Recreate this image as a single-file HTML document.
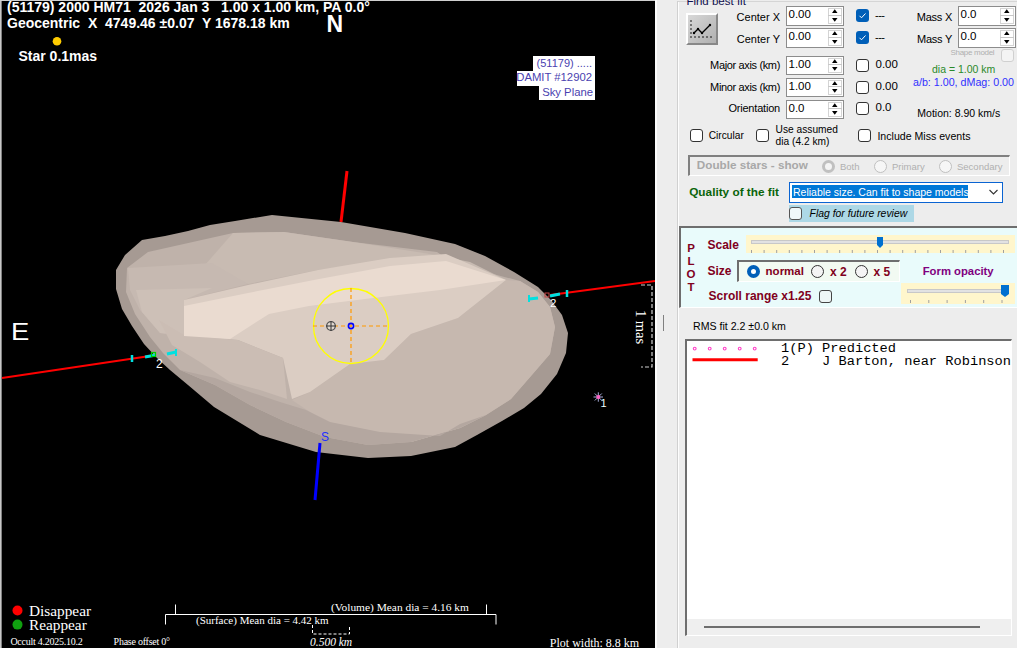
<!DOCTYPE html>
<html><head><meta charset="utf-8"><style>
html,body{margin:0;padding:0;width:1017px;height:648px;overflow:hidden;background:#000;}
body{position:relative;font-family:"Liberation Sans", sans-serif;}
.t{position:absolute;white-space:nowrap;}
.b{position:absolute;}
</style></head><body>
<div class="b" style="left:0px;top:0px;width:655px;height:648px;background:#000;"></div>
<div class="b" style="left:0px;top:0px;width:1px;height:648px;background:#c8c8c8;"></div>
<div class="b" style="left:1px;top:0px;width:1px;height:648px;background:#808080;"></div>
<div class="b" style="left:0px;top:0px;width:655px;height:1px;background:#d0d0d0;"></div>
<svg class="b" style="left:0;top:0" width="655" height="648" viewBox="0 0 655 648">
<polygon points="116,270 125,255 142,240 165,236 188,231 210,225 235,221 272,215 341,222 405,233 455,244 485,256 514,272 538,287 551,300 562,315 568,333 566,353 557,374 541,394 524,408 502,421 477,435 455,447 411,456 368,458 316,452 260,435 214,407 188,385 170,370 157,358 144,344 132,326 122,309 116,289" fill="#a69a93"/>
<polygon points="127,268 148,252 233,233 284,232 353,242 437,252 450,261 479,270 497,275 520,281 538,292 550,307 555,327 550,354 531,376 511,399 486,415 460,428 411,442 368,445 325,437 286,422 250,405 215,385 180,370 163,353 150,337 135,314 126,292" fill="#bfb2aa" />
<polygon points="233,233 284,232 353,242 430,254 470,262 506,280 446,258 390,260 318,270 248,284 205,265" fill="#c8bbb2" />
<polygon points="128,268 212,263 248,284 184,300 184,336 160,333 140,310 130,290" fill="#c6b9b1" />
<polygon points="136,290 212,288 184,300 184,336 160,333 142,312" fill="#cdc0b7" />
<polygon points="506,280 520,281 538,292 550,307 555,327 550,354 531,376 511,399 486,415 460,428 411,442 368,433 325,422 292,400 310,392 330,378 350,364 384,360 411,334 458,318" fill="#c6b8af" />
<polygon points="180,370 215,385 250,405 286,422 325,437 368,445 411,442 460,428 486,415 460,424 440,436 380,432 330,422 306,410 280,402 250,392 215,378" fill="#b4a7a0" />
<polygon points="184,300 248,285 318,270 390,258 446,254 506,280 458,318 411,334 384,360 350,364 330,378 310,392 292,399 283,358 238,340 184,335" fill="#dbcdc3" />
<polygon points="159,320 184,335 238,340 283,358 287,399 260,390 230,382 200,362 172,345" fill="#cbbdb4" />
<polygon points="184,306 248,293 319,279 390,266 446,261 506,280 440,290 365,299 309,306 269,314 230,339 184,336" fill="#eadbd0" />
<line x1="2" y1="378" x2="150" y2="356" stroke="#ff0000" stroke-width="2"/>
<line x1="550" y1="295" x2="655" y2="281" stroke="#ff0000" stroke-width="2"/>
<line x1="347" y1="171" x2="341" y2="222" stroke="#ff0000" stroke-width="3"/>
<line x1="320" y1="443" x2="315" y2="500" stroke="#0000ff" stroke-width="3"/>
<circle cx="351" cy="326" r="37.5" fill="none" stroke="#ffff00" stroke-width="1.3"/>
<line x1="313" y1="326" x2="389" y2="326" stroke="#ff9900" stroke-width="1.2" stroke-dasharray="4,3"/>
<line x1="351" y1="288" x2="351" y2="364" stroke="#ff9900" stroke-width="1.2" stroke-dasharray="4,3"/>
<circle cx="351" cy="326" r="2.6" fill="none" stroke="#0000ff" stroke-width="1.6"/>
<circle cx="331" cy="326" r="4.3" fill="#e0d8d0" stroke="#555" stroke-width="1.3"/>
<line x1="326" y1="326" x2="336" y2="326" stroke="#333" stroke-width="1"/>
<line x1="331" y1="321" x2="331" y2="331" stroke="#333" stroke-width="1"/>
<line x1="145" y1="357" x2="156" y2="355" stroke="#00e0e0" stroke-width="3"/>
<line x1="132" y1="355" x2="132" y2="362" stroke="#00e0e0" stroke-width="2.5"/>
<rect x="151.5" y="352.5" width="4" height="4" fill="none" stroke="#00d000" stroke-width="1.2"/>
<line x1="167" y1="354" x2="176" y2="352" stroke="#00e0e0" stroke-width="3"/>
<line x1="176" y1="349" x2="176" y2="356" stroke="#00e0e0" stroke-width="2"/>
<line x1="529" y1="299" x2="538" y2="298" stroke="#00e0e0" stroke-width="3"/>
<line x1="529" y1="295" x2="529" y2="302" stroke="#00e0e0" stroke-width="2"/>
<line x1="550" y1="296" x2="560" y2="294" stroke="#00e0e0" stroke-width="3"/>
<line x1="567" y1="290" x2="567" y2="297" stroke="#00e0e0" stroke-width="2.5"/>
<rect x="545" y="293" width="4" height="4" fill="none" stroke="#c04040" stroke-width="1"/>
<path d="M641 285 H652 V367 H641" fill="none" stroke="#d0d0d0" stroke-width="1.2" stroke-dasharray="4,2"/>
<g stroke="#b8c0f0" stroke-width="0.9"><line x1="593.5" y1="397" x2="603" y2="397"/><line x1="598.3" y1="392.3" x2="598.3" y2="401.7"/><line x1="594.8" y1="393.5" x2="601.8" y2="400.5"/><line x1="601.8" y1="393.5" x2="594.8" y2="400.5"/></g><circle cx="598.3" cy="397" r="2" fill="#ff60c0"/>
<circle cx="57" cy="41.3" r="4.3" fill="#ffcc00"/>
<circle cx="17.5" cy="610.5" r="5" fill="#ff0000"/>
<circle cx="17.5" cy="624.6" r="5" fill="#10a010"/>
<path d="M165.5 624.5 V614.5 H496 V624.5" fill="none" stroke="#ffffff" stroke-width="1"/>
<path d="M175.5 604.5 V614.5 M486.5 604.5 V614.5" fill="none" stroke="#ffffff" stroke-width="1"/>
<path d="M312.5 625 V634 H349.5 V625" fill="none" stroke="#ffffff" stroke-width="1" stroke-dasharray="3,2"/>
</svg>
<div class="t" style="top:-0.35px;font-size:14px;line-height:14px;color:#fff;font-weight:bold;left:7.00px;">(51179) 2000 HM71&nbsp; 2026 Jan 3 &nbsp; 1.00 x 1.00 km, PA 0.0°</div>
<div class="t" style="top:15.65px;font-size:14px;line-height:14px;color:#fff;font-weight:bold;left:7.00px;">Geocentric&nbsp; X&nbsp; 4749.46 ±0.07&nbsp; Y 1678.18 km</div>
<div class="t" style="top:12.53px;font-size:23px;line-height:23px;color:#fff;font-weight:bold;left:326.50px;">N</div>
<div class="t" style="top:49.15px;font-size:14px;line-height:14px;color:#fff;font-weight:bold;left:18.50px;">Star 0.1mas</div>
<div class="t" style="top:319.56px;font-size:24.5px;line-height:24.5px;color:#fff;left:11.00px;transform:scaleX(1.12);transform-origin:left;">E</div>
<div class="b" style="left:533px;top:56px;width:62px;height:15px;background:#fff;"></div>
<div class="b" style="left:517px;top:71px;width:78px;height:15px;background:#fff;"></div>
<div class="b" style="left:539px;top:85px;width:56px;height:15px;background:#fff;"></div>
<div class="t" style="top:57.69px;font-size:11px;line-height:11px;color:#4a3fb0;right:425.00px;">(51179) .....</div>
<div class="t" style="top:72.43px;font-size:11.3px;line-height:11.3px;color:#4a3fb0;right:425.00px;">DAMIT #12902</div>
<div class="t" style="top:86.93px;font-size:11.3px;line-height:11.3px;color:#4a3fb0;right:424.00px;">Sky Plane</div>
<div class="t" style="top:430.84px;font-size:12px;line-height:12px;color:#2030ff;left:321.00px;">S</div>
<div class="t" style="top:357.84px;font-size:12px;line-height:12px;color:#fff;left:156.00px;">2</div>
<div class="t" style="top:298.27px;font-size:11.5px;line-height:11.5px;color:#fff;left:550.00px;">2</div>
<div class="t" style="top:398.39px;font-size:11px;line-height:11px;color:#f0ffff;left:600.50px;">1</div>
<div class="t" style="top:603.19px;font-size:15.3px;line-height:15.3px;color:#fff;font-family:'Liberation Serif', serif;left:29.00px;">Disappear</div>
<div class="t" style="top:616.79px;font-size:15.3px;line-height:15.3px;color:#fff;font-family:'Liberation Serif', serif;left:29.00px;">Reappear</div>
<div class="t" style="top:637.42px;font-size:10px;line-height:10px;color:#fff;font-family:'Liberation Serif', serif;letter-spacing:-0.25px;left:10.40px;">Occult 4.2025.10.2</div>
<div class="t" style="top:637.42px;font-size:10px;line-height:10px;color:#fff;font-family:'Liberation Serif', serif;letter-spacing:-0.25px;left:113.60px;">Phase offset 0°</div>
<div class="t" style="top:615.29px;font-size:11px;line-height:11px;color:#fff;font-family:'Liberation Serif', serif;left:196.00px;">(Surface) Mean dia = 4.42 km</div>
<div class="t" style="top:601.75px;font-size:11.4px;line-height:11.4px;color:#fff;font-family:'Liberation Serif', serif;left:331.00px;">(Volume) Mean dia = 4.16 km</div>
<div class="t" style="top:637.17px;font-size:11.5px;line-height:11.5px;color:#fff;font-family:'Liberation Serif', serif;font-style:italic;left:310.00px;">0.500 km</div>
<div class="t" style="top:636.75px;font-size:12px;line-height:12px;color:#fff;font-family:'Liberation Serif', serif;left:549.80px;">Plot width: 8.8 km</div>
<div class="t" style="left:641px;top:327px;font-family:'Liberation Serif',serif;font-size:14.5px;line-height:14.5px;color:#fff;transform:translate(-50%,-50%) rotate(90deg);">1 mas</div>
<div class="b" style="left:655px;top:0px;width:362px;height:648px;background:#ededed;"></div>
<div class="b" style="left:655px;top:0px;width:2px;height:648px;background:#fcfcfc;"></div>
<div class="b" style="left:677px;top:1px;width:340px;height:1px;background:#d5d5d5;"></div>
<div class="b" style="left:677px;top:1px;width:1px;height:647px;background:#d0d0d0;"></div>
<div class="b" style="left:678px;top:2px;width:1px;height:646px;background:#fdfdfd;"></div>
<div class="t" style="top:-4.33px;font-size:11.5px;line-height:11.5px;color:#101050;left:686.40px;">Find best fit</div>
<div class="b" style="left:686px;top:13px;width:32px;height:32px;box-sizing:border-box;border-top:2px solid #fff;border-left:2px solid #fff;border-right:2px solid #888;border-bottom:2px solid #888;background:linear-gradient(135deg,#d8d8d8,#b0b0b0);"></div>
<svg class="b" style="left:686px;top:13px" width="32" height="32"><g fill="#000"><circle cx="5" cy="8" r="0.8"/><circle cx="5" cy="12" r="0.8"/><circle cx="5" cy="16" r="0.8"/><circle cx="5" cy="20" r="0.8"/><circle cx="5" cy="24" r="0.8"/><circle cx="9" cy="24" r="0.8"/><circle cx="13" cy="24" r="0.8"/><circle cx="17" cy="24" r="0.8"/><circle cx="21" cy="24" r="0.8"/><circle cx="25" cy="24" r="0.8"/></g><polyline points="8,20 12,16 16,20 24,12" fill="none" stroke="#000" stroke-width="1.3"/><g fill="#000"><circle cx="8" cy="20" r="1.2"/><circle cx="12" cy="16" r="1.2"/><circle cx="16" cy="20" r="1.2"/><circle cx="24" cy="12" r="1.2"/></g></svg>
<div class="b" style="left:786px;top:6px;width:58px;height:20px;box-sizing:border-box;border:1px solid #8c8c8c;background:#fff;"></div>
<div class="b" style="left:828px;top:8px;width:14px;height:16px;box-sizing:border-box;border:1px solid #d4d4d4;background:#fff;"></div>
<div class="b" style="left:828px;top:15px;width:14px;height:1px;background:#c8c8c8;"></div>
<svg class="b" style="left:828px;top:6px" width="14" height="20"><polygon points="4,7 9.5,7 6.75,3.2" fill="#000"/><polygon points="4,12 9.5,12 6.75,15.8" fill="#000"/></svg>
<div class="t" style="top:8.77px;font-size:11.5px;line-height:11.5px;color:#000;left:788.50px;">0.00</div>
<div class="b" style="left:786px;top:28px;width:58px;height:20px;box-sizing:border-box;border:1px solid #8c8c8c;background:#fff;"></div>
<div class="b" style="left:828px;top:30px;width:14px;height:16px;box-sizing:border-box;border:1px solid #d4d4d4;background:#fff;"></div>
<div class="b" style="left:828px;top:37px;width:14px;height:1px;background:#c8c8c8;"></div>
<svg class="b" style="left:828px;top:28px" width="14" height="20"><polygon points="4,7 9.5,7 6.75,3.2" fill="#000"/><polygon points="4,12 9.5,12 6.75,15.8" fill="#000"/></svg>
<div class="t" style="top:30.77px;font-size:11.5px;line-height:11.5px;color:#000;left:788.50px;">0.00</div>
<div class="b" style="left:786px;top:56px;width:58px;height:19px;box-sizing:border-box;border:1px solid #8c8c8c;background:#fff;"></div>
<div class="b" style="left:828px;top:58px;width:14px;height:15px;box-sizing:border-box;border:1px solid #d4d4d4;background:#fff;"></div>
<div class="b" style="left:828px;top:64px;width:14px;height:1px;background:#c8c8c8;"></div>
<svg class="b" style="left:828px;top:56px" width="14" height="19"><polygon points="4,7 9.5,7 6.75,3.2" fill="#000"/><polygon points="4,11 9.5,11 6.75,14.8" fill="#000"/></svg>
<div class="t" style="top:58.77px;font-size:11.5px;line-height:11.5px;color:#000;left:788.50px;">1.00</div>
<div class="b" style="left:786px;top:78px;width:58px;height:19px;box-sizing:border-box;border:1px solid #8c8c8c;background:#fff;"></div>
<div class="b" style="left:828px;top:80px;width:14px;height:15px;box-sizing:border-box;border:1px solid #d4d4d4;background:#fff;"></div>
<div class="b" style="left:828px;top:86px;width:14px;height:1px;background:#c8c8c8;"></div>
<svg class="b" style="left:828px;top:78px" width="14" height="19"><polygon points="4,7 9.5,7 6.75,3.2" fill="#000"/><polygon points="4,11 9.5,11 6.75,14.8" fill="#000"/></svg>
<div class="t" style="top:80.77px;font-size:11.5px;line-height:11.5px;color:#000;left:788.50px;">1.00</div>
<div class="b" style="left:786px;top:100px;width:58px;height:19px;box-sizing:border-box;border:1px solid #8c8c8c;background:#fff;"></div>
<div class="b" style="left:828px;top:102px;width:14px;height:15px;box-sizing:border-box;border:1px solid #d4d4d4;background:#fff;"></div>
<div class="b" style="left:828px;top:108px;width:14px;height:1px;background:#c8c8c8;"></div>
<svg class="b" style="left:828px;top:100px" width="14" height="19"><polygon points="4,7 9.5,7 6.75,3.2" fill="#000"/><polygon points="4,11 9.5,11 6.75,14.8" fill="#000"/></svg>
<div class="t" style="top:102.77px;font-size:11.5px;line-height:11.5px;color:#000;left:788.50px;">0.0</div>
<div class="b" style="left:958px;top:6px;width:58px;height:20px;box-sizing:border-box;border:1px solid #8c8c8c;background:#fff;"></div>
<div class="b" style="left:1000px;top:8px;width:14px;height:16px;box-sizing:border-box;border:1px solid #d4d4d4;background:#fff;"></div>
<div class="b" style="left:1000px;top:15px;width:14px;height:1px;background:#c8c8c8;"></div>
<svg class="b" style="left:1000px;top:6px" width="14" height="20"><polygon points="4,7 9.5,7 6.75,3.2" fill="#000"/><polygon points="4,12 9.5,12 6.75,15.8" fill="#000"/></svg>
<div class="t" style="top:8.77px;font-size:11.5px;line-height:11.5px;color:#000;left:960.50px;">0.0</div>
<div class="b" style="left:958px;top:28px;width:58px;height:20px;box-sizing:border-box;border:1px solid #8c8c8c;background:#fff;"></div>
<div class="b" style="left:1000px;top:30px;width:14px;height:16px;box-sizing:border-box;border:1px solid #d4d4d4;background:#fff;"></div>
<div class="b" style="left:1000px;top:37px;width:14px;height:1px;background:#c8c8c8;"></div>
<svg class="b" style="left:1000px;top:28px" width="14" height="20"><polygon points="4,7 9.5,7 6.75,3.2" fill="#000"/><polygon points="4,12 9.5,12 6.75,15.8" fill="#000"/></svg>
<div class="t" style="top:30.77px;font-size:11.5px;line-height:11.5px;color:#000;left:960.50px;">0.0</div>
<div class="t" style="top:11.89px;font-size:11px;line-height:11px;color:#000;right:237.00px;">Center X</div>
<div class="t" style="top:33.59px;font-size:11px;line-height:11px;color:#000;right:237.00px;">Center Y</div>
<div class="t" style="top:60.49px;font-size:11px;line-height:11px;color:#000;letter-spacing:-0.35px;right:237.00px;">Major axis (km)</div>
<div class="t" style="top:82.09px;font-size:11px;line-height:11px;color:#000;letter-spacing:-0.35px;right:237.00px;">Minor axis (km)</div>
<div class="t" style="top:103.39px;font-size:11px;line-height:11px;color:#000;letter-spacing:-0.2px;right:237.00px;">Orientation</div>
<div class="t" style="top:11.99px;font-size:11px;line-height:11px;color:#000;letter-spacing:-0.25px;right:65.00px;">Mass X</div>
<div class="t" style="top:33.69px;font-size:11px;line-height:11px;color:#000;letter-spacing:-0.25px;right:65.00px;">Mass Y</div>
<div class="b" style="left:856px;top:9px;width:13px;height:13px;border-radius:3px;background:#005fb8;"></div>
<svg class="b" style="left:856px;top:9px" width="13" height="13"><polyline points="3.5,6.8 5.5,8.8 9.5,4.5" fill="none" stroke="#fff" stroke-width="1"/></svg>
<div class="b" style="left:856px;top:31px;width:13px;height:13px;border-radius:3px;background:#005fb8;"></div>
<svg class="b" style="left:856px;top:31px" width="13" height="13"><polyline points="3.5,6.8 5.5,8.8 9.5,4.5" fill="none" stroke="#fff" stroke-width="1"/></svg>
<div class="t" style="top:9.69px;font-size:11px;line-height:11px;color:#000;letter-spacing:-0.5px;left:875.00px;">---</div>
<div class="t" style="top:31.69px;font-size:11px;line-height:11px;color:#000;letter-spacing:-0.5px;left:875.00px;">---</div>
<div class="b" style="left:856px;top:59px;width:13px;height:13px;box-sizing:border-box;border-radius:3px;border:1px solid #333;background:#fff;"></div>
<div class="b" style="left:856px;top:81px;width:13px;height:13px;box-sizing:border-box;border-radius:3px;border:1px solid #333;background:#fff;"></div>
<div class="b" style="left:856px;top:102px;width:13px;height:13px;box-sizing:border-box;border-radius:3px;border:1px solid #333;background:#fff;"></div>
<div class="t" style="top:59.07px;font-size:11.5px;line-height:11.5px;color:#000;left:875.50px;">0.00</div>
<div class="t" style="top:80.77px;font-size:11.5px;line-height:11.5px;color:#000;left:875.50px;">0.00</div>
<div class="t" style="top:102.27px;font-size:11.5px;line-height:11.5px;color:#000;left:875.50px;">0.0</div>
<div class="t" style="top:49.23px;font-size:8px;line-height:8px;color:#b0b0b0;letter-spacing:-0.3px;left:950.50px;">Shape model</div>
<div class="b" style="left:1001px;top:49px;width:13px;height:13px;box-sizing:border-box;border-radius:3px;border:1px solid #d0d0d0;background:#f4f4f4;"></div>
<div class="t" style="top:63.71px;font-size:10.5px;line-height:10.5px;color:#2a8a2a;left:932.00px;">dia = 1.00 km</div>
<div class="t" style="top:76.94px;font-size:10.7px;line-height:10.7px;color:#3030ff;left:913.00px;">a/b: 1.00, dMag: 0.00</div>
<div class="t" style="top:107.91px;font-size:10.5px;line-height:10.5px;color:#000;left:917.30px;">Motion: 8.90 km/s</div>
<div class="b" style="left:690px;top:129px;width:13px;height:13px;box-sizing:border-box;border-radius:3px;border:1px solid #333;background:#fff;"></div>
<div class="b" style="left:756px;top:129px;width:13px;height:13px;box-sizing:border-box;border-radius:3px;border:1px solid #333;background:#fff;"></div>
<div class="b" style="left:858px;top:129px;width:13px;height:13px;box-sizing:border-box;border-radius:3px;border:1px solid #333;background:#fff;"></div>
<div class="t" style="top:130.97px;font-size:10.2px;line-height:10.2px;color:#000;left:708.70px;">Circular</div>
<div class="t" style="top:124.57px;font-size:10.2px;line-height:10.2px;color:#000;left:775.60px;">Use assumed</div>
<div class="t" style="top:136.77px;font-size:10.2px;line-height:10.2px;color:#000;left:775.60px;">dia (4.2 km)</div>
<div class="t" style="top:130.63px;font-size:10.6px;line-height:10.6px;color:#000;left:877.40px;">Include Miss events</div>
<div class="b" style="left:688px;top:155px;width:322px;height:21px;box-sizing:border-box;border-top:2px solid #808080;border-left:2px solid #808080;border-right:1px solid #fff;border-bottom:1px solid #fff;"></div>
<div class="t" style="top:159.40px;font-size:11.7px;line-height:11.7px;color:#a8a8a8;font-weight:bold;left:696.80px;">Double stars - show</div>
<div class="b" style="left:822px;top:160px;width:13px;height:13px;box-sizing:border-box;border-radius:50%;border:3px solid #c0c0c0;background:#f4f4f4;"></div>
<div class="t" style="top:161.96px;font-size:9.5px;line-height:9.5px;color:#b0b0b0;left:840.00px;">Both</div>
<div class="b" style="left:874px;top:160px;width:13px;height:13px;box-sizing:border-box;border-radius:50%;border:1px solid #c0c0c0;background:#f6f6f6;"></div>
<div class="t" style="top:161.96px;font-size:9.5px;line-height:9.5px;color:#b0b0b0;left:892.00px;">Primary</div>
<div class="b" style="left:939px;top:160px;width:13px;height:13px;box-sizing:border-box;border-radius:50%;border:1px solid #c0c0c0;background:#f6f6f6;"></div>
<div class="t" style="top:161.96px;font-size:9.5px;line-height:9.5px;color:#b0b0b0;left:957.00px;">Secondary</div>
<div class="t" style="top:186.71px;font-size:11.8px;line-height:11.8px;color:#0a640a;font-weight:bold;left:689.20px;">Quality of the fit</div>
<div class="b" style="left:789px;top:182px;width:214px;height:21px;box-sizing:border-box;border:1px solid #0a64d2;background:#fff;"></div>
<div class="b" style="left:792px;top:185px;width:176px;height:13px;background:#0078d7;"></div>
<div class="t" style="top:186.61px;font-size:10.5px;line-height:10.5px;color:#fff;left:793.00px;">Reliable size. Can fit to shape models</div>
<svg class="b" style="left:988px;top:187px" width="12" height="10"><polyline points="1.5,3 5.5,7 9.5,3" fill="none" stroke="#333" stroke-width="1.1"/></svg>
<div class="b" style="left:789px;top:205px;width:125px;height:17px;background:#add8e6;"></div>
<div class="b" style="left:789px;top:207px;width:13px;height:13px;box-sizing:border-box;border-radius:3px;border:1px solid #555;background:#f0f8fa;"></div>
<div class="t" style="top:209.20px;font-size:10.4px;line-height:10.4px;color:#000;font-style:italic;left:809.60px;">Flag for future review</div>
<div class="b" style="left:679px;top:226px;width:338px;height:82px;box-sizing:border-box;border-top:2px solid #6e6e6e;border-left:2px solid #6e6e6e;border-bottom:1px solid #fff;background:#e9fbfb;"></div>
<div class="t" style="top:242.77px;font-size:11.5px;line-height:11.5px;color:#800020;font-weight:bold;left:691.00px;transform:translateX(-50%);">P</div>
<div class="t" style="top:255.87px;font-size:11.5px;line-height:11.5px;color:#800020;font-weight:bold;left:691.00px;transform:translateX(-50%);">L</div>
<div class="t" style="top:268.97px;font-size:11.5px;line-height:11.5px;color:#800020;font-weight:bold;left:691.00px;transform:translateX(-50%);">O</div>
<div class="t" style="top:282.07px;font-size:11.5px;line-height:11.5px;color:#800020;font-weight:bold;left:691.00px;transform:translateX(-50%);">T</div>
<div class="t" style="top:238.54px;font-size:12px;line-height:12px;color:#800020;font-weight:bold;left:707.50px;">Scale</div>
<div class="b" style="left:746px;top:235px;width:269px;height:18px;background:#fff6cc;"></div>
<div class="b" style="left:751px;top:240px;width:258px;height:4px;background:#e2e2e2;border:1px solid #c8c8c8;box-sizing:border-box;"></div>
<svg class="b" style="left:746px;top:235px" width="269" height="18"><line x1="5.5" y1="15" x2="5.5" y2="18" stroke="#a0a0a0" stroke-width="1"/><line x1="18.1" y1="15" x2="18.1" y2="18" stroke="#a0a0a0" stroke-width="1"/><line x1="30.7" y1="15" x2="30.7" y2="18" stroke="#a0a0a0" stroke-width="1"/><line x1="43.3" y1="15" x2="43.3" y2="18" stroke="#a0a0a0" stroke-width="1"/><line x1="55.9" y1="15" x2="55.9" y2="18" stroke="#a0a0a0" stroke-width="1"/><line x1="68.5" y1="15" x2="68.5" y2="18" stroke="#a0a0a0" stroke-width="1"/><line x1="81.1" y1="15" x2="81.1" y2="18" stroke="#a0a0a0" stroke-width="1"/><line x1="93.7" y1="15" x2="93.7" y2="18" stroke="#a0a0a0" stroke-width="1"/><line x1="106.3" y1="15" x2="106.3" y2="18" stroke="#a0a0a0" stroke-width="1"/><line x1="118.9" y1="15" x2="118.9" y2="18" stroke="#a0a0a0" stroke-width="1"/><line x1="131.5" y1="15" x2="131.5" y2="18" stroke="#a0a0a0" stroke-width="1"/><line x1="144.1" y1="15" x2="144.1" y2="18" stroke="#a0a0a0" stroke-width="1"/><line x1="156.7" y1="15" x2="156.7" y2="18" stroke="#a0a0a0" stroke-width="1"/><line x1="169.3" y1="15" x2="169.3" y2="18" stroke="#a0a0a0" stroke-width="1"/><line x1="181.9" y1="15" x2="181.9" y2="18" stroke="#a0a0a0" stroke-width="1"/><line x1="194.5" y1="15" x2="194.5" y2="18" stroke="#a0a0a0" stroke-width="1"/><line x1="207.1" y1="15" x2="207.1" y2="18" stroke="#a0a0a0" stroke-width="1"/><line x1="219.7" y1="15" x2="219.7" y2="18" stroke="#a0a0a0" stroke-width="1"/><line x1="232.3" y1="15" x2="232.3" y2="18" stroke="#a0a0a0" stroke-width="1"/><line x1="244.9" y1="15" x2="244.9" y2="18" stroke="#a0a0a0" stroke-width="1"/><line x1="257.5" y1="15" x2="257.5" y2="18" stroke="#a0a0a0" stroke-width="1"/><path d="M131 2 H137 V10 L134 13 L131 10 Z" fill="#0070d0"/></svg>
<div class="t" style="top:264.74px;font-size:12px;line-height:12px;color:#800020;font-weight:bold;left:707.50px;">Size</div>
<div class="b" style="left:737px;top:260px;width:163px;height:22px;box-sizing:border-box;border-top:2px solid #6e6e6e;border-left:2px solid #6e6e6e;border-right:1px solid #fff;border-bottom:1px solid #fff;background:#f2faf2;"></div>
<div class="b" style="left:747px;top:265px;width:13px;height:13px;box-sizing:border-box;border-radius:50%;border:4px solid #005fb8;background:#fff;"></div>
<div class="t" style="top:266.27px;font-size:11.5px;line-height:11.5px;color:#800020;font-weight:bold;left:765.60px;">normal</div>
<div class="b" style="left:811px;top:265px;width:13px;height:13px;box-sizing:border-box;border-radius:50%;border:1px solid #333;background:#f4f4f4;"></div>
<div class="t" style="top:265.84px;font-size:12px;line-height:12px;color:#800020;font-weight:bold;left:830.00px;">x 2</div>
<div class="b" style="left:855px;top:265px;width:13px;height:13px;box-sizing:border-box;border-radius:50%;border:1px solid #333;background:#f4f4f4;"></div>
<div class="t" style="top:265.84px;font-size:12px;line-height:12px;color:#800020;font-weight:bold;left:873.40px;">x 5</div>
<div class="t" style="top:265.73px;font-size:11.3px;line-height:11.3px;color:#800080;font-weight:bold;left:922.70px;">Form opacity</div>
<div class="t" style="top:290.34px;font-size:12px;line-height:12px;color:#800020;font-weight:bold;left:708.60px;">Scroll range x1.25</div>
<div class="b" style="left:819px;top:290px;width:13px;height:13px;box-sizing:border-box;border-radius:3px;border:1px solid #444;background:#eef6f6;"></div>
<div class="b" style="left:901px;top:283px;width:114px;height:21px;background:#fff6cc;"></div>
<div class="b" style="left:907px;top:289px;width:102px;height:4px;background:#e2e2e2;border:1px solid #c8c8c8;box-sizing:border-box;"></div>
<svg class="b" style="left:901px;top:283px" width="114" height="21"><line x1="9.5" y1="17" x2="9.5" y2="20" stroke="#a0a0a0" stroke-width="1"/><line x1="27.8" y1="17" x2="27.8" y2="20" stroke="#a0a0a0" stroke-width="1"/><line x1="46.1" y1="17" x2="46.1" y2="20" stroke="#a0a0a0" stroke-width="1"/><line x1="64.4" y1="17" x2="64.4" y2="20" stroke="#a0a0a0" stroke-width="1"/><line x1="82.7" y1="17" x2="82.7" y2="20" stroke="#a0a0a0" stroke-width="1"/><line x1="101.0" y1="17" x2="101.0" y2="20" stroke="#a0a0a0" stroke-width="1"/><path d="M100 2 H108 V11 L104 14 L100 11 Z" fill="#0070d0"/></svg>
<div class="b" style="left:663px;top:315px;width:1px;height:16px;background:#808080;"></div>
<div class="t" style="top:320.53px;font-size:10.6px;line-height:10.6px;color:#000;left:693.00px;">RMS fit 2.2 ±0.0 km</div>
<div class="b" style="left:685px;top:339px;width:327px;height:297px;box-sizing:border-box;border-top:2px solid #6e6e6e;border-left:2px solid #6e6e6e;border-right:1px solid #fff;border-bottom:1px solid #fff;background:#fff;"></div>
<div class="b" style="left:687px;top:619px;width:324px;height:16px;background:#efefef;"></div>
<div class="b" style="left:704px;top:626px;width:276px;height:2px;background:#6e6e6e;"></div>
<svg class="b" style="left:687px;top:341px" width="100" height="25"><circle cx="7.7" cy="7.6" r="1.4" fill="none" stroke="#ff40c8" stroke-width="1.1"/><circle cx="22.7" cy="7.6" r="1.4" fill="none" stroke="#ff40c8" stroke-width="1.1"/><circle cx="37.7" cy="7.6" r="1.4" fill="none" stroke="#ff40c8" stroke-width="1.1"/><circle cx="52.7" cy="7.6" r="1.4" fill="none" stroke="#ff40c8" stroke-width="1.1"/><circle cx="67.7" cy="7.6" r="1.4" fill="none" stroke="#ff40c8" stroke-width="1.1"/><line x1="5.5" y1="18.7" x2="70.7" y2="18.7" stroke="#ff0000" stroke-width="3"/></svg>
<div class="t" style="top:341.90px;font-size:13.7px;line-height:13.7px;color:#000;font-family:'Liberation Mono', monospace;left:781.00px;">1(P) Predicted</div>
<div class="t" style="top:354.50px;font-size:13.7px;line-height:13.7px;color:#000;font-family:'Liberation Mono', monospace;left:781.00px;">2&nbsp;&nbsp;&nbsp;&nbsp;J Barton, near Robinson</div>
</body></html>
